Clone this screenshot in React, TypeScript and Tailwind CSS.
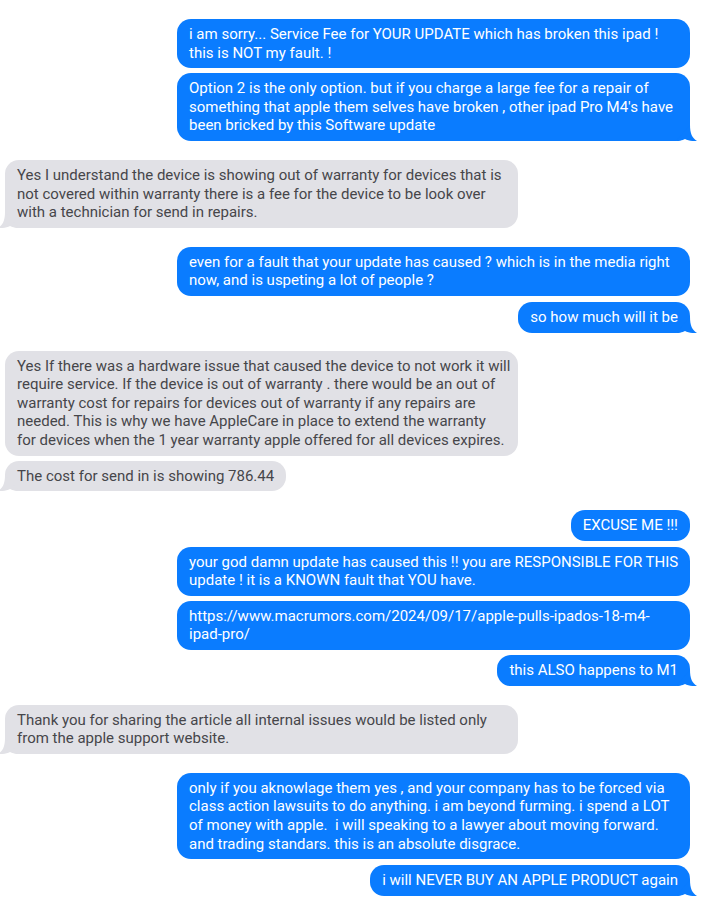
import React from 'react';

type Msg = { from: 'me' | 'them'; lines: string[]; gap: number; tail?: boolean; wide?: boolean };

const messages: Msg[] = [
  { from: 'me', gap: 19, wide: true, lines: ['i am sorry... Service Fee for YOUR UPDATE which has broken this ipad !', 'this is NOT my fault. !'] },
  { from: 'me', gap: 5, wide: true, tail: true, lines: ['Option 2 is the only option. but if you charge a large fee for a repair of', "something that apple them selves have broken , other ipad Pro M4's have", 'been bricked by this Software update'] },
  { from: 'them', gap: 19, wide: true, tail: true, lines: ['Yes I understand the device is showing out of warranty for devices that is', 'not covered within warranty there is a fee for the device to be look over', 'with a technician for send in repairs.'] },
  { from: 'me', gap: 19, wide: true, lines: ['even for a fault that your update has caused ? which is in the media right', 'now, and is uspeting a lot of people ?'] },
  { from: 'me', gap: 6, tail: true, lines: ['so how much will it be'] },
  { from: 'them', gap: 18, wide: true, lines: ['Yes If there was a hardware issue that caused the device to not work it will', 'require service. If the device is out of warranty . there would be an out of', 'warranty cost for repairs for devices out of warranty if any repairs are', 'needed. This is why we have AppleCare in place to extend the warranty', 'for devices when the 1 year warranty apple offered for all devices expires.'] },
  { from: 'them', gap: 5, tail: true, lines: ['The cost for send in is showing 786.44'] },
  { from: 'me', gap: 19, lines: ['EXCUSE ME !!!'] },
  { from: 'me', gap: 6, wide: true, lines: ['your god damn update has caused this !! you are RESPONSIBLE FOR THIS', 'update ! it is a KNOWN fault that YOU have.'] },
  { from: 'me', gap: 5, wide: true, lines: ['https://www.macrumors.com/2024/09/17/apple-pulls-ipados-18-m4-', 'ipad-pro/'] },
  { from: 'me', gap: 5, tail: true, lines: ['this ALSO happens to M1'] },
  { from: 'them', gap: 19, wide: true, tail: true, lines: ['Thank you for sharing the article all internal issues would be listed only', 'from the apple support website.'] },
  { from: 'me', gap: 19, wide: true, lines: ['only if you aknowlage them yes , and your company has to be forced via', 'class action lawsuits to do anything. i am beyond furming. i spend a LOT', 'of money with apple.  i will speaking to a lawyer about moving forward.', 'and trading standars. this is an absolute disgrace.'] },
  { from: 'me', gap: 6, tail: true, lines: ['i will NEVER BUY AN APPLE PRODUCT again'] },
];

function Tail({ me }: { me: boolean }) {
  return (
    <svg
      viewBox="0 0 21 16"
      className={
        me
          ? 'absolute bottom-0 right-[-7px] w-[21px] h-[16px] fill-[#0a7cff]'
          : 'absolute bottom-0 left-[-7px] w-[21px] h-[16px] fill-[#e1e1e6] -scale-x-100'
      }
    >
      <path d="M14 0 C14 8 16 13 21 16 C17 16.5 12 15.5 9 14 C6 15.5 3 16 0 16 Z" />
    </svg>
  );
}

function Bubble({ m }: { m: Msg }) {
  const me = m.from === 'me';
  return (
    <div className={me ? 'flex justify-end' : 'flex justify-start'} style={{ marginTop: m.gap }}>
      <div
        className={
          (me ? 'bg-[#0a7cff] text-white ' : 'bg-[#e1e1e6] text-[#46464a] ') +
          (m.wide ? 'w-[513px] ' : '') +
          "relative rounded-[14px] px-3 py-[6px] font-['Roboto',sans-serif] text-[15px] leading-[18.6px] whitespace-pre"
        }
      >
        {m.lines.map((l, i) => (
          <div key={i}>{l}</div>
        ))}
        {m.tail && <Tail me={me} />}
      </div>
    </div>
  );
}

export default function App() {
  return (
    <div className="w-[725px] h-[906px] bg-white overflow-hidden pl-[5px] pr-[35px]">
      <div className="flex flex-col">
        {messages.map((m, i) => (
          <Bubble key={i} m={m} />
        ))}
      </div>
    </div>
  );
}
